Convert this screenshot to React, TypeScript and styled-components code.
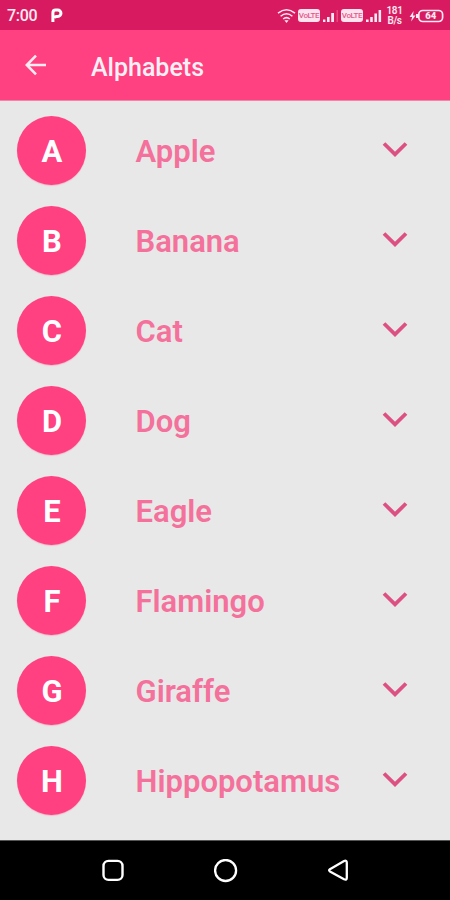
import React from "react";
import styled, { createGlobalStyle } from "styled-components";

const GlobalStyle = createGlobalStyle`
  body { margin: 0; background: #e8e8e8; font-family: Roboto, sans-serif; }
  * { box-sizing: border-box; }
`;

const Screen = styled.div`
  display: flex;
  flex-direction: column;
  width: 450px;
  height: 900px;
  overflow: hidden;
  background: #e8e8e8;
`;

const StatusBar = styled.header`
  display: flex;
  align-items: center;
  justify-content: space-between;
  flex: none;
  height: 30px;
  padding: 1px 6px 0 7px;
  background: #d81b60;
  color: #ffe9f2;
`;

const StatusGroup = styled.div<{ $gap: number }>`
  display: flex;
  align-items: center;
  gap: ${(p) => p.$gap}px;
`;

const Clock = styled.span`
  width: 31px;
  font-size: 16px;
  font-weight: 500;
  line-height: 18px;
  letter-spacing: -0.3px;
  white-space: nowrap;
`;

const Volte = styled.span`
  display: flex;
  align-items: center;
  justify-content: center;
  width: 22px;
  height: 13px;
  border-radius: 3px;
  background: #ffe3ee;
  color: #df5a8d;
  font-size: 8px;
  font-weight: 500;
  letter-spacing: -0.4px;
`;

const Speed = styled.span`
  display: flex;
  flex-direction: column;
  align-items: center;
  width: 17px;
  margin: 0 4px 0 2px;
  font-size: 10px;
  font-weight: 600;
  line-height: 10px;
  letter-spacing: -0.4px;
`;

const AppBar = styled.div`
  display: flex;
  align-items: center;
  flex: none;
  height: 71px;
  padding: 0 25px;
  gap: 44px;
  background: #ff4081;
  border-bottom: 1px solid #f086ab;
`;

const BackButton = styled.button`
  display: flex;
  width: 22px;
  height: 22px;
  padding: 0;
  border: 0;
  background: none;
`;

const Title = styled.h1`
  margin: 5px 0 0;
  color: #fff0f6;
  font-size: 25px;
  font-weight: 500;
  line-height: 30px;
`;

const List = styled.ul`
  flex: 1;
  margin: 0;
  padding: 5px 0 0;
  list-style: none;
`;

const Row = styled.li`
  display: flex;
  align-items: center;
  height: 90px;
  padding: 0 42px 0 17px;
`;

const Avatar = styled.span`
  display: flex;
  align-items: center;
  justify-content: center;
  width: 69px;
  height: 69px;
  margin-bottom: 1px;
  padding: 2px 0 0 1px;
  border-radius: 50%;
  background: #ff4081;
  box-shadow: 0 1px 1px rgba(255, 64, 129, 0.25);
  color: #fff;
  font-size: 31px;
  font-weight: 700;
`;

const Word = styled.span`
  flex: 1;
  margin-left: 49.5px;
  padding-top: 2px;
  color: #f4719c;
  font-size: 31px;
  font-weight: 600;
  line-height: 40px;
`;

const NavBar = styled.nav`
  display: flex;
  align-items: center;
  justify-content: space-between;
  flex: none;
  height: 60px;
  padding: 0 100px 0 101px;
  background: #000;
  border-top: 1px solid #555;
`;

const WifiIcon = () => (
  <svg width="19" height="16" viewBox="0 0 19 16" fill="none" stroke="currentColor" strokeWidth="1.5">
    <path d="M1 5.2Q9.5-1.8 18 5.2M3.6 8.2Q9.5 3.2 15.4 8.2M6.2 11Q9.5 8.2 12.8 11" />
    <path d="M7.4 12.3h4.2L9.5 15z" fill="currentColor" stroke="none" />
  </svg>
);

const SignalIcon = () => (
  <svg width="17" height="13" viewBox="0 0 17 13" fill="currentColor">
    <path d="M1 10.5h2.6V13H1zM5.2 8h2.6v5H5.2zM9.4 4.5H12V13H9.4zM13.6 1h2.5v12h-2.5z" />
  </svg>
);

const SignalWeakIcon = () => (
  <svg width="17" height="13" viewBox="0 0 17 13">
    <path d="M1 10.5h2.4V13H1zM5 8h2.6v5H5zM9.2 4H12v9H9.2z" fill="currentColor" />
    <path d="M14.5 1H16v12h-1.5z" fill="#e9487f" />
  </svg>
);

const ParkingIcon = () => (
  <svg width="13" height="15" viewBox="0 0 13 15" fill="none" stroke="#fff" strokeWidth="3">
    <path d="M2.9 14V5q0-2.9 2.7-2.9h2.2a3.1 3.1 0 0 1 0 6.300H6.500q-1.600 0-2 1.800" />
  </svg>
);

const BatteryIcon = () => (
  <svg width="35" height="14" viewBox="0 0 35 14" fill="none" stroke="currentColor">
    <path d="M4.600 2 .6 8h2.500l-1 4.500L6.600 6.500H4z" fill="currentColor" stroke="none" />
    <rect x="9.800" y="1.500" width="23.800" height="11" rx="4" strokeWidth="1.700" />
    <path d="M8 5v4" strokeWidth="2" />
    <text x="21.700" y="10.300" textAnchor="middle" fontSize="9.500" fontWeight="900" fill="currentColor" stroke="none">
      64
    </text>
  </svg>
);

const BackIcon = () => (
  <svg width="22" height="22" viewBox="0 0 22 22" fill="none" stroke="#ffeaf2" strokeWidth="2.6">
    <path d="M21 11H2.5M11 1.7 1.8 11l9.2 9.3" />
  </svg>
);

const ChevronIcon = styled(({ className }: { className?: string }) => (
  <svg className={className} width="26" height="18" viewBox="0 0 26 18" fill="none" stroke="#dc5182" strokeWidth="3.8">
    <path d="M2 2.5 13 13.3 24 2.5" />
  </svg>
))`
  margin-bottom: 2px;
`;

const RecentsIcon = () => (
  <svg width="24" height="24" viewBox="0 0 24 24" fill="none" stroke="#fff" strokeWidth="2.4">
    <rect x="2.5" y="1.9" width="19" height="19" rx="5" />
  </svg>
);

const HomeIcon = () => (
  <svg width="24" height="24" viewBox="0 0 24 24" fill="none" stroke="#fff" strokeWidth="2.3">
    <circle cx="11.6" cy="11.5" r="10.5" />
  </svg>
);

const NavBackIcon = () => (
  <svg width="24" height="24" viewBox="0 0 24 24" fill="none" stroke="#fff" strokeWidth="2.3" strokeLinejoin="round">
    <path d="M3.9 10.2 18.100 2Q20.800 1 20.800 3.700v15q0 2.800-2.700 1.600L3.900 12.400q-1.600-1.100 0-2.200z" />
  </svg>
);

const words = ["Apple", "Banana", "Cat", "Dog", "Eagle", "Flamingo", "Giraffe", "Hippopotamus"];

export default function App() {
  return (
    <Screen>
      <GlobalStyle />
      <StatusBar>
        <StatusGroup $gap={12}>
          <Clock>7:00</Clock>
          <ParkingIcon />
        </StatusGroup>
        <StatusGroup $gap={2}>
          <WifiIcon />
          <Volte>VoLTE</Volte>
          <SignalWeakIcon />
          <Volte>VoLTE</Volte>
          <SignalIcon />
          <Speed>
            <span>181</span>
            <span>B/s</span>
          </Speed>
          <BatteryIcon />
        </StatusGroup>
      </StatusBar>
      <AppBar>
        <BackButton aria-label="Back">
          <BackIcon />
        </BackButton>
        <Title>Alphabets</Title>
      </AppBar>
      <List>
        {words.map((word) => (
          <Row key={word}>
            <Avatar>{word[0]}</Avatar>
            <Word>{word}</Word>
            <ChevronIcon />
          </Row>
        ))}
      </List>
      <NavBar>
        <RecentsIcon />
        <HomeIcon />
        <NavBackIcon />
      </NavBar>
    </Screen>
  );
}
